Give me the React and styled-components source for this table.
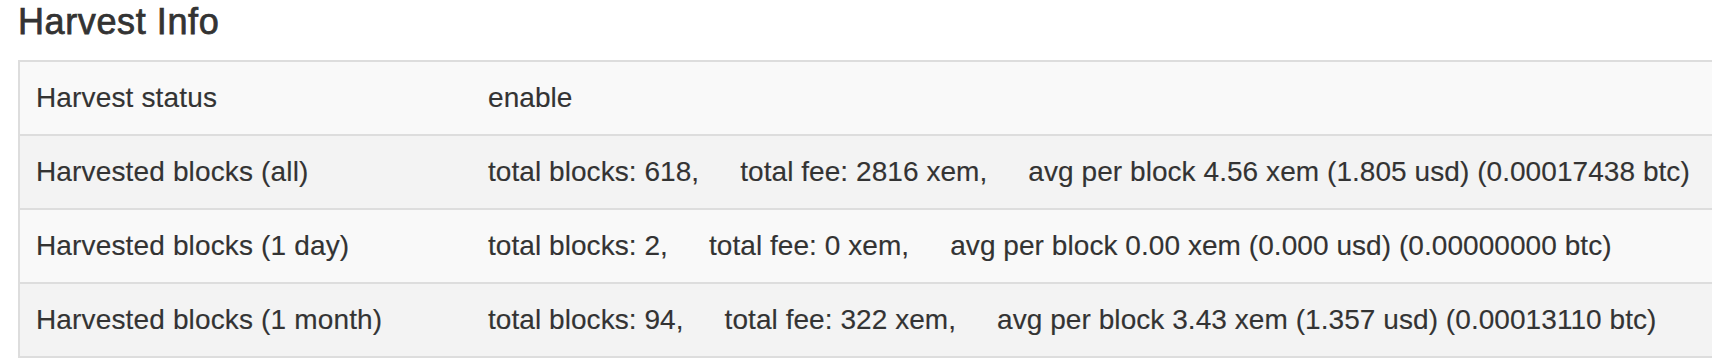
import React from "react";
import styled, { createGlobalStyle } from "styled-components";

const GlobalStyle = createGlobalStyle`
  html, body {
    margin: 0;
    padding: 0;
    background: #ffffff;
    overflow: hidden;
  }
  body {
    font-family: "Liberation Sans", Arial, Helvetica, sans-serif;
    color: #333333;
    font-size: 28px;
    line-height: 40px;
  }
`;

const Page = styled.div`
  padding-left: 18px;
  overflow: hidden;
`;

const Title = styled.h4`
  margin: 2px 0 18px;
  font-size: 36px;
  line-height: 40px;
  font-weight: 500;
  letter-spacing: 0.6px;
  color: #333333;
  -webkit-text-stroke: 0.75px #333333;
`;

const Table = styled.table`
  width: calc(100% + 60px);
  border-collapse: collapse;
  border-left: 2px solid #dddddd;
  border-bottom: 2px solid #dddddd;
`;

const Row = styled.tr`
  background: ${(p) => (p.$odd ? "#f9f9f9" : "#f3f3f3")};
`;

const Cell = styled.td`
  padding: 16px;
  border-top: 2px solid #dddddd;
  vertical-align: top;
  white-space: nowrap;
  width: ${(p) => (p.$label ? "420px" : "auto")};
  font-size: 28px;
  line-height: 40px;
  letter-spacing: ${(p) => (p.$label ? "0.15px" : "0.06px")};
  -webkit-text-stroke: 0.15px #333333;
`;

const Segment = styled.span`
  & + & {
    margin-left: 41px;
  }
`;

const rows = [
  { label: "Harvest status", parts: ["enable"] },
  {
    label: "Harvested blocks (all)",
    parts: [
      "total blocks: 618,",
      "total fee: 2816 xem,",
      "avg per block 4.56 xem (1.805 usd) (0.00017438 btc)",
    ],
  },
  {
    label: "Harvested blocks (1 day)",
    parts: [
      "total blocks: 2,",
      "total fee: 0 xem,",
      "avg per block 0.00 xem (0.000 usd) (0.00000000 btc)",
    ],
  },
  {
    label: "Harvested blocks (1 month)",
    parts: [
      "total blocks: 94,",
      "total fee: 322 xem,",
      "avg per block 3.43 xem (1.357 usd) (0.00013110 btc)",
    ],
  },
];

export default function App() {
  return (
    <>
      <GlobalStyle />
      <Page>
        <Title>Harvest Info</Title>
        <Table>
          <tbody>
            {rows.map((r, i) => (
              <Row key={r.label} $odd={i % 2 === 0}>
                <Cell $label>{r.label}</Cell>
                <Cell>
                  {r.parts.map((p) => (
                    <Segment key={p}>{p}</Segment>
                  ))}
                </Cell>
              </Row>
            ))}
          </tbody>
        </Table>
      </Page>
    </>
  );
}
